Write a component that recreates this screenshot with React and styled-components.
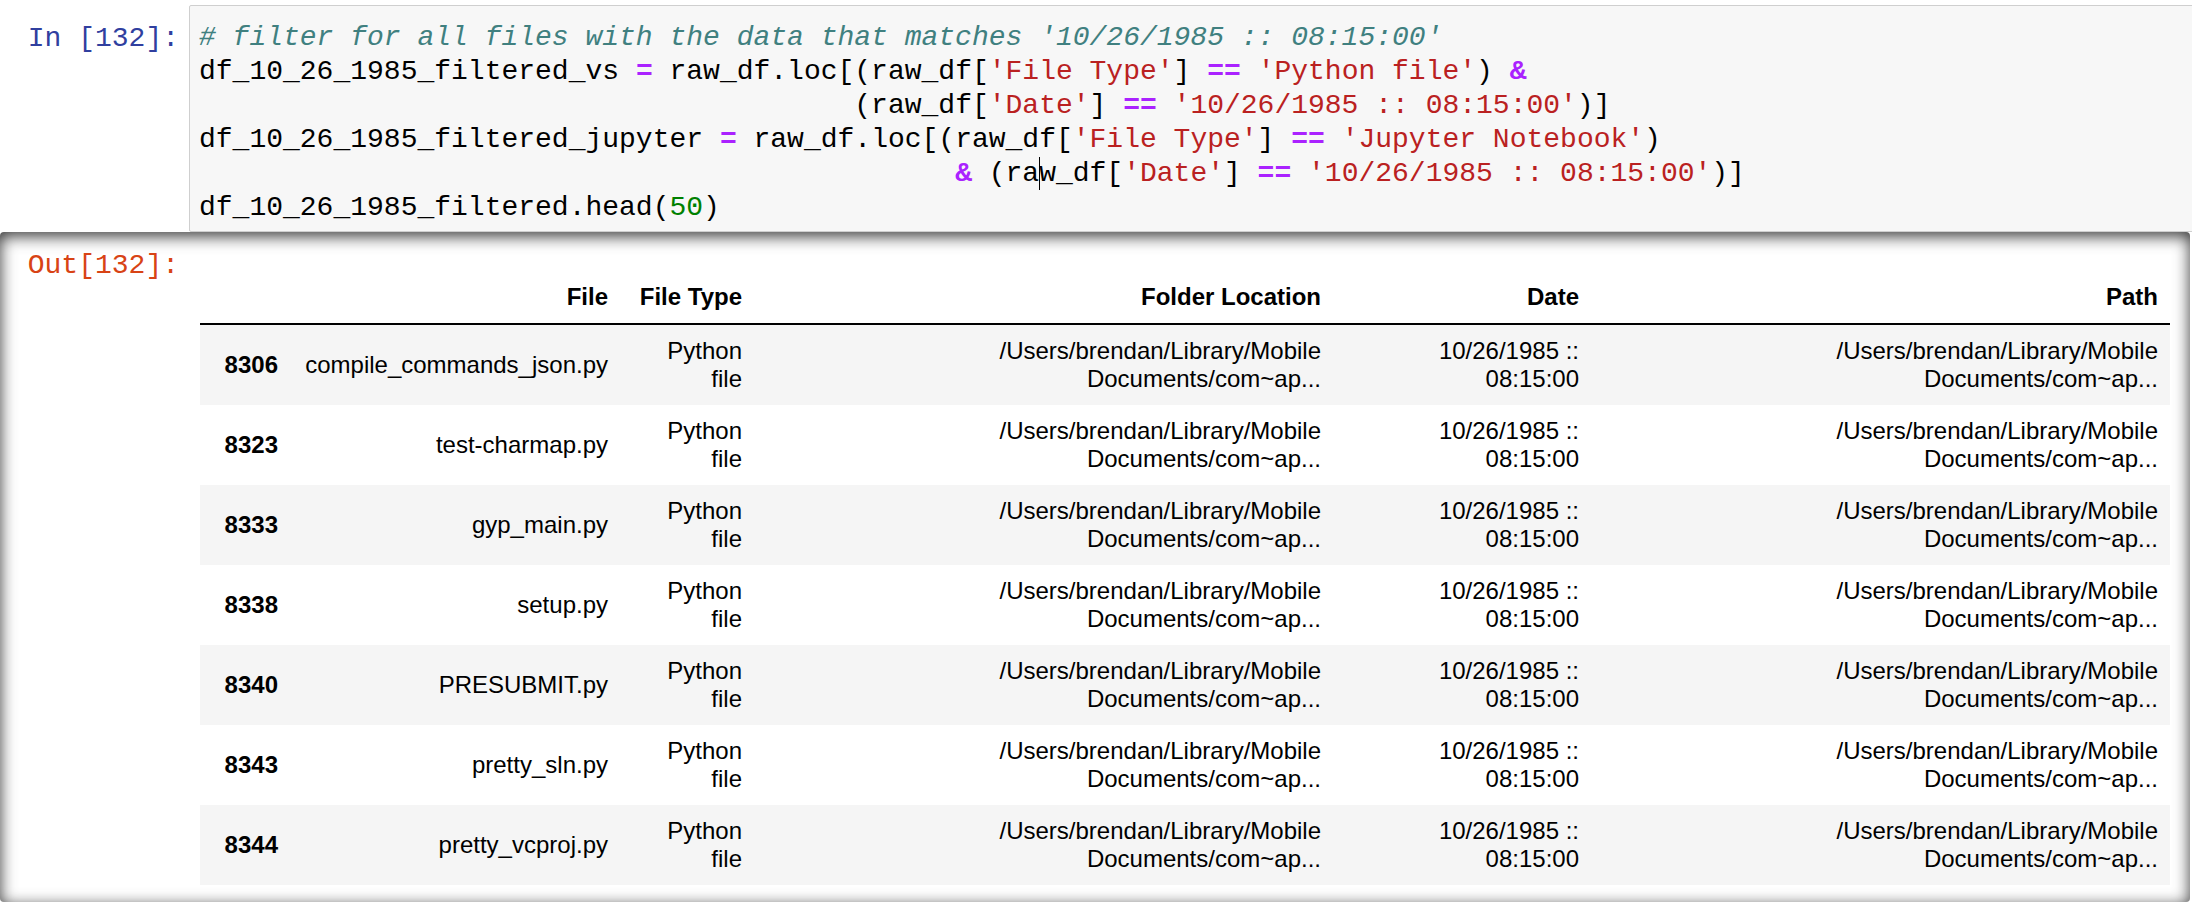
import React from "react"
import styled, { createGlobalStyle } from "styled-components"

const GlobalStyle = createGlobalStyle`
  html, body {
    margin: 0;
    padding: 0;
    background: #fff;
    overflow: hidden;
  }
  body {
    width: 2192px;
    height: 904px;
  }
`

const rows = [
  { idx: 8306, file: "compile_commands_json.py" },
  { idx: 8323, file: "test-charmap.py" },
  { idx: 8333, file: "gyp_main.py" },
  { idx: 8338, file: "setup.py" },
  { idx: 8340, file: "PRESUBMIT.py" },
  { idx: 8343, file: "pretty_sln.py" },
  { idx: 8344, file: "pretty_vcproj.py" },
  { idx: 8345, file: "pretty_gyp.py" },
]

const columns = [
  { label: "", width: 90 },
  { label: "File", width: 330 },
  { label: "File Type", width: 134 },
  { label: "Folder Location", width: 579 },
  { label: "Date", width: 258 },
  { label: "Path", width: 579 },
]

const FOLDER = "/Users/brendan/Library/Mobile Documents/com~ap..."
const DATE = "10/26/1985 :: 08:15:00"

const App = () => {
  return (
    <Notebook>
      <GlobalStyle />
      <InputRow>
        <Prompt $pad={17}>In&nbsp;[132]:</Prompt>
        <CodeBox>
          <CodeLine>
            <Comment># filter for all files with the data that matches '10/26/1985 :: 08:15:00'</Comment>
          </CodeLine>
          <CodeLine>
            df_10_26_1985_filtered_vs <Op>=</Op> raw_df.loc[(raw_df[<Str>'File Type'</Str>] <Op>==</Op> <Str>'Python file'</Str>) <Op>&amp;</Op>
          </CodeLine>
          <CodeLine>
            {" ".repeat(39)}(raw_df[<Str>'Date'</Str>] <Op>==</Op> <Str>'10/26/1985 :: 08:15:00'</Str>)]
          </CodeLine>
          <CodeLine>
            df_10_26_1985_filtered_jupyter <Op>=</Op> raw_df.loc[(raw_df[<Str>'File Type'</Str>] <Op>==</Op> <Str>'Jupyter Notebook'</Str>)
          </CodeLine>
          <CodeLine>
            {" ".repeat(45)}<Op>&amp;</Op> (ra<Caret />w_df[<Str>'Date'</Str>] <Op>==</Op> <Str>'10/26/1985 :: 08:15:00'</Str>)]
          </CodeLine>
          <CodeLine>
            df_10_26_1985_filtered.head(<Num>50</Num>)
          </CodeLine>
        </CodeBox>
      </InputRow>

      <OutputScroll>
        <Prompt $out $pad={17}>Out[132]:</Prompt>
        <OutputBody>
          <DataFrame>
            <thead>
              <tr>
                {columns.map((c, i) => (
                  <HeadCell key={i} $w={c.width}>{c.label}</HeadCell>
                ))}
              </tr>
            </thead>
            <tbody>
              {rows.map((r) => (
                <Row key={r.idx}>
                  <IndexCell>{r.idx}</IndexCell>
                  <Cell>{r.file}</Cell>
                  <Cell>Python file</Cell>
                  <Cell>{FOLDER}</Cell>
                  <Cell>{DATE}</Cell>
                  <Cell>{FOLDER}</Cell>
                </Row>
              ))}
            </tbody>
          </DataFrame>
        </OutputBody>
      </OutputScroll>
    </Notebook>
  )
}

const Notebook = styled.div`
  display: flex;
  flex-direction: column;
  padding-top: 5px;
  width: 2192px;
`

const InputRow = styled.div`
  display: flex;
  align-items: flex-start;
`

const Prompt = styled.div`
  flex-shrink: 0;
  width: 189px;
  box-sizing: border-box;
  padding-right: 10px;
  padding-top: ${(p) => p.$pad}px;
  text-align: right;
  font-family: "Liberation Mono", monospace;
  font-size: 28px;
  line-height: 34px;
  white-space: nowrap;
  color: ${(p) => (p.$out ? "#D84315" : "#303F9F")};
`

const CodeBox = styled.div`
  flex: 1;
  margin-right: -20px;
  background: #f7f7f7;
  border: 1px solid #cfcfcf;
  border-radius: 2px;
  padding: 15px 0 6px 9px;
  font-family: "Liberation Mono", monospace;
  font-size: 28px;
  line-height: 34px;
  color: #000;
`

const CodeLine = styled.div`
  height: 34px;
  white-space: pre;
`

const Comment = styled.span`
  color: #408080;
  font-style: italic;
`

const Str = styled.span`
  color: #ba2121;
`

const Op = styled.span`
  color: #aa22ff;
  font-weight: bold;
`

const Num = styled.span`
  color: #008000;
`

const Caret = styled.span`
  display: inline-block;
  width: 0;
  height: 33px;
  vertical-align: top;
  border-left: 1px solid #000;
  margin-right: -1px;
`

const OutputScroll = styled.div`
  display: flex;
  align-items: flex-start;
  width: 2190px;
  height: 670px;
  overflow: hidden;
  border-radius: 4px;
  box-shadow: inset 0 4px 16px rgba(0, 0, 0, 0.8);
`

const OutputBody = styled.div`
  padding: 39px 0 0 11px;
`

const DataFrame = styled.table`
  width: 1970px;
  table-layout: fixed;
  border-collapse: collapse;
  border-spacing: 0;
  font-family: "Liberation Sans", Arial, sans-serif;
  font-size: 24px;
  line-height: 28px;
  color: #000;
`

const HeadCell = styled.th`
  box-sizing: border-box;
  width: ${(p) => p.$w}px;
  padding: 12px;
  text-align: right;
  vertical-align: bottom;
  font-weight: bold;
  border-bottom: 2px solid #000;
`

const Row = styled.tr`
  &:nth-child(odd) {
    background: #f5f5f5;
  }
`

const Cell = styled.td`
  padding: 12px;
  text-align: right;
  vertical-align: middle;
`

const IndexCell = styled.th`
  padding: 12px;
  text-align: right;
  vertical-align: middle;
  font-weight: bold;
`

export default App
